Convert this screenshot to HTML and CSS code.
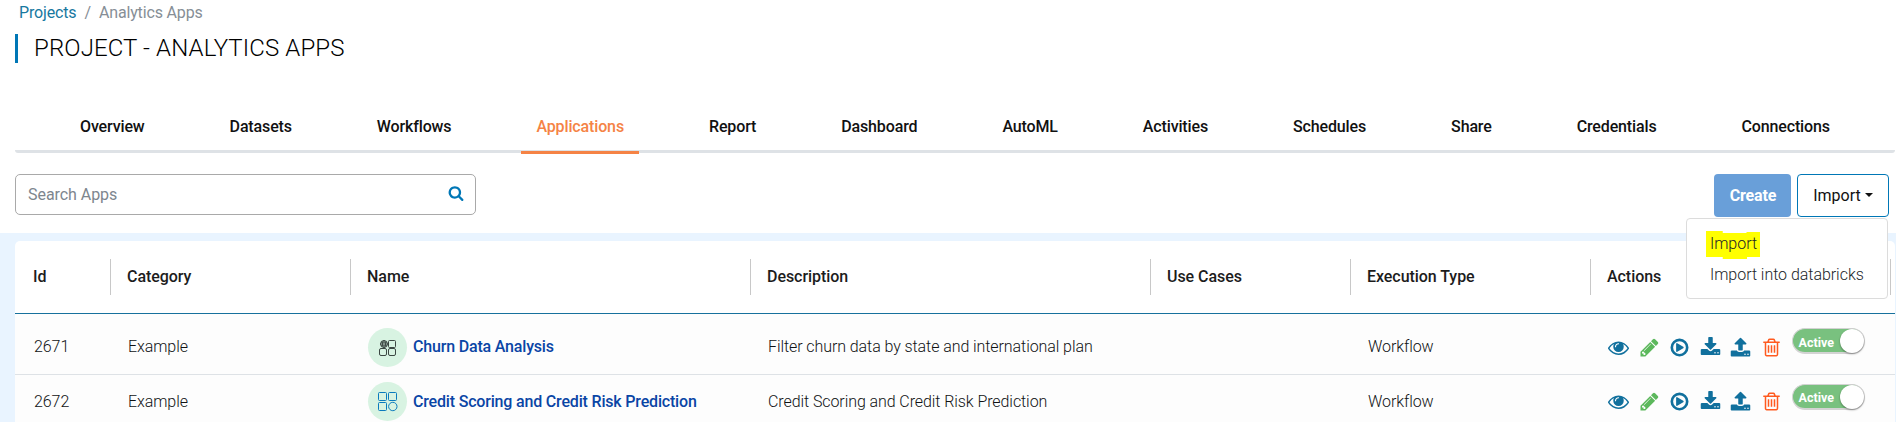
FILE: index.html
```html
<!DOCTYPE html>
<html lang="en">
<head>
<meta charset="utf-8">
<title>Project - Analytics Apps</title>
<link rel="stylesheet" href="styles.css">
</head>
<body>
<svg class="sprite" aria-hidden="true">
  <symbol id="i-search" viewBox="0 0 1792 1792"><path d="M1216 832q0-185-131.500-316.500t-316.500-131.500-316.500 131.500-131.500 316.500 131.500 316.500 316.500 131.500 316.500-131.500 131.500-316.500zm512 832q0 52-38 90t-90 38q-54 0-90-38l-343-342q-179 124-399 124-143 0-273.500-55.500t-225-150-150-225-55.500-273.500 55.500-273.500 150-225 225-150 273.500-55.500 273.500 55.500 225 150 150 225 55.500 273.500q0 220-124 399l343 343q37 37 37 90z"/></symbol>
  <symbol id="i-eye" viewBox="0 0 1792 1792"><path d="M1664 960q-152-236-381-353 61 104 61 225 0 185-131.500 316.500t-316.500 131.500-316.500-131.500-131.500-316.500q0-121 61-225-229 117-381 353 133 205 333.500 326.500t434.500 121.500 434.500-121.500 333.500-326.500zm-720-384q0-20-14-34t-34-14q-125 0-214.500 89.500t-89.500 214.500q0 20 14 34t34 14 34-14 14-34q0-86 61-147t147-61q20 0 34-14t14-34zm848 384q0 34-20 69-140 230-376.500 368.500t-499.500 138.500-499.500-139-376.500-368q-20-35-20-69t20-69q140-229 376.500-368t499.500-139 499.500 139 376.500 368q20 35 20 69z"/></symbol>
  <symbol id="i-pencil" viewBox="0 0 1792 1792"><path d="M491 1536l91-91-235-235-91 91v107h128v128h107zm523-928q0-22-22-22-10 0-17 7l-542 542q-7 7-7 17 0 22 22 22 10 0 17-7l542-542q7-7 7-17zm-54-192l416 416-832 832h-416v-416zm683 96q0 53-37 90l-166 166-416-416 166-165q36-38 90-38 53 0 91 38l235 234q37 39 37 91z"/></symbol>
  <symbol id="i-play" viewBox="0 0 1792 1792"><circle cx="896" cy="896" r="656" fill="none" stroke="currentColor" stroke-width="224"/><path d="M1248 896q0 37-32 55l-512 310q-32 18-64 0t-32-55v-620q0-37 32-55t64 0l512 310q32 18 32 55z"/></symbol>
  <symbol id="i-download" viewBox="0 0 1792 1792"><path d="M1344 1344q0-26-19-45t-45-19-45 19-19 45 19 45 45 19 45-19 19-45zm256 0q0-26-19-45t-45-19-45 19-19 45 19 45 45 19 45-19 19-45zm128-224v320q0 40-28 68t-68 28h-1472q-40 0-68-28t-28-68v-320q0-40 28-68t68-28h465l135 136q58 56 136 56t136-56l136-136h464q40 0 68 28t28 68zm-325-569q17 41-14 70l-448 448q-18 19-45 19t-45-19l-448-448q-31-29-14-70 17-39 59-39h256v-448q0-26 19-45t45-19h256q26 0 45 19t19 45v448h256q42 0 59 39z"/></symbol>
  <symbol id="i-upload" viewBox="0 0 1792 1792"><path d="M1344 1472q0-26-19-45t-45-19-45 19-19 45 19 45 45 19 45-19 19-45zm256 0q0-26-19-45t-45-19-45 19-19 45 19 45 45 19 45-19 19-45zm128-224v320q0 40-28 68t-68 28h-1472q-40 0-68-28t-28-68v-320q0-40 28-68t68-28h427q21 56 70.500 92t110.500 36h256q61 0 110.500-36t70.500-92h427q40 0 68 28t28 68zm-325-648q-17 40-59 40h-256v448q0 26-19 45t-45 19h-256q-26 0-45-19t-19-45v-448h-256q-42 0-59-40-17-39 14-69l448-448q18-19 45-19t45 19l448 448q31 30 14 69z"/></symbol>
  <symbol id="i-trash" viewBox="0 0 1792 1792"><path d="M704 736v576q0 14-9 23t-23 9h-64q-14 0-23-9t-9-23v-576q0-14 9-23t23-9h64q14 0 23 9t9 23zm256 0v576q0 14-9 23t-23 9h-64q-14 0-23-9t-9-23v-576q0-14 9-23t23-9h64q14 0 23 9t9 23zm256 0v576q0 14-9 23t-23 9h-64q-14 0-23-9t-9-23v-576q0-14 9-23t23-9h64q14 0 23 9t9 23zm128 724v-948h-896v948q0 22 7 40.500t14.500 27 10.500 8.500h832q3 0 10.500-8.500t14.500-27 7-40.500zm-672-1076h448l-48-117q-7-9-17-11h-317q-10 2-17 11zm928 32v64q0 14-9 23t-23 9h-96v948q0 83-47 143.500t-113 60.500h-832q-66 0-113-58.500t-47-141.500v-952h-96q-14 0-23-9t-9-23v-64q0-14 9-23t23-9h309l70-167q15-37 54-63t79-26h320q40 0 79 26t54 63l70 167h309q14 0 23 9t9 23z"/></symbol>
</svg>

<nav class="breadcrumb"><a class="crumb-link" href="#">Projects</a><span class="crumb-sep">/</span><span>Analytics Apps</span></nav>
<h1 class="title">PROJECT - ANALYTICS APPS</h1>

<nav class="tabs">
  <a class="tab">Overview</a>
  <a class="tab">Datasets</a>
  <a class="tab">Workflows</a>
  <a class="tab active">Applications</a>
  <a class="tab">Report</a>
  <a class="tab">Dashboard</a>
  <a class="tab">AutoML</a>
  <a class="tab">Activities</a>
  <a class="tab">Schedules</a>
  <a class="tab">Share</a>
  <a class="tab">Credentials</a>
  <a class="tab">Connections</a>
</nav>

<div class="toolbar">
  <div class="search"><span>Search Apps</span><svg class="search-icon"><use href="#i-search"/></svg></div>
  <div class="buttons">
    <button class="btn create">Create</button>
    <div class="import-wrap">
      <button class="btn import">Import<span class="caret"></span></button>
      <div class="menu">
        <a class="menu-item"><span class="marked">Import</span></a>
        <a class="menu-item">Import into databricks</a>
      </div>
    </div>
  </div>
</div>

<main class="panel">
  <div class="card">
    <div class="grid head">
      <div class="th">Id</div><div class="th">Category</div><div class="th">Name</div><div class="th">Description</div><div class="th">Use Cases</div><div class="th">Execution Type</div><div class="th">Actions</div>
    </div>
    <div class="grid row">
      <div class="td">2671</div>
      <div class="td">Example</div>
      <div class="td name"><span class="badge"><svg class="app-icon dark" viewBox="0 0 20 20"><circle cx="6" cy="6" r="3.500"/><ellipse cx="6" cy="6" rx="1.500" ry="3.500"/><path d="M2 6h8M3 4.200h6M3 7.800h6"/><rect x="10.500" y="2.500" width="7" height="7" rx="1"/><rect x="1.500" y="10.500" width="7" height="7" rx="1.500"/><rect x="10.500" y="10.500" width="7" height="7" rx="1.500"/></svg></span><a class="link">Churn Data Analysis</a></div>
      <div class="td">Filter churn data by state and international plan</div>
      <div class="td"></div>
      <div class="td">Workflow</div>
      <div class="td actions">
        <svg class="icon"><use href="#i-eye"/></svg><svg class="icon green"><use href="#i-pencil"/></svg><svg class="icon"><use href="#i-play"/></svg><svg class="icon"><use href="#i-download"/></svg><svg class="icon"><use href="#i-upload"/></svg><svg class="icon red"><use href="#i-trash"/></svg>
        <span class="toggle">Active<span class="knob"></span></span>
      </div>
    </div>
    <div class="grid row second">
      <div class="td">2672</div>
      <div class="td">Example</div>
      <div class="td name"><span class="badge"><svg class="app-icon" viewBox="0 0 20 20"><rect x=".5" y=".5" width="8" height="8" rx="1"/><rect x="10.500" y=".5" width="8" height="8" rx="1"/><rect x=".5" y="10.500" width="8" height="8" rx="1"/><circle cx="14.800" cy="14.500" r="4.200"/></svg></span><a class="link">Credit Scoring and Credit Risk Prediction</a></div>
      <div class="td">Credit Scoring and Credit Risk Prediction</div>
      <div class="td"></div>
      <div class="td">Workflow</div>
      <div class="td actions">
        <svg class="icon"><use href="#i-eye"/></svg><svg class="icon green"><use href="#i-pencil"/></svg><svg class="icon"><use href="#i-play"/></svg><svg class="icon"><use href="#i-download"/></svg><svg class="icon"><use href="#i-upload"/></svg><svg class="icon red"><use href="#i-trash"/></svg>
        <span class="toggle">Active<span class="knob"></span></span>
      </div>
    </div>
  </div>
</main>
</body>
</html>
```
FILE: styles.css
```css
* { box-sizing: border-box; }
body {
  margin: 0;
  height: 422px;
  overflow: hidden;
  background: #fff;
  color: #101214;
  font: 400 16px/24px Roboto, sans-serif;
}
.sprite { display: none; }
svg { fill: currentColor; }

.breadcrumb { display: flex; height: 25px; padding: 1px 0 0 19px; color: #868e96; letter-spacing: -.15px; }
.crumb-link { color: #17789f; text-decoration: none; }
.crumb-sep { padding: 0 8px; }
.title {
  height: 29px;
  margin: 9px 0 0 15px;
  padding-left: 16px;
  border-left: 3px solid #0077b6;
  color: #000;
  font-size: 24px;
  font-weight: 300;
  line-height: 28px;
  letter-spacing: .12px;
}

.tabs {
  display: flex;
  justify-content: space-between;
  height: 53px;
  margin: 37px 1px 0 15px;
  padding: 0 50px;
  border-bottom: 3px solid #dee2e6;
  border-radius: 3px;
}
.tab {
  height: 54px;
  padding: 15px 15px 0;
  color: #111;
  font-weight: 500;
  letter-spacing: -.14px;
}
.tab.active { border-bottom: 3px solid #f58345; color: #f58345; }

.toolbar { display: flex; justify-content: space-between; height: 80px; padding: 21px 7px 0 15px; }
.search {
  display: flex;
  justify-content: space-between;
  width: 461px;
  height: 41px;
  padding: 8px 11px 0 12px;
  border: 1px solid #a9a9a9;
  border-radius: 5px;
  color: #7d868e;
  letter-spacing: -.05px;
}
.search-icon { width: 16px; height: 16px; margin-top: 2px; color: #0077b6; }
.buttons { display: flex; gap: 6px; }
.btn { height: 43px; border-radius: 4px; font: inherit; }
.create { width: 77px; padding: 0 0 0 1px; border: 0; background: #699fd9; color: #fff; font-weight: 700; letter-spacing: -.15px; }
.import-wrap { position: relative; }
.import {
  display: flex;
  align-items: center;
  justify-content: center;
  width: 92px;
  padding: 0;
  border: 1px solid #0077b6;
  background: #fff;
  color: #111;
}
.caret { margin: -2px 0 0 4px; border: 4.500px solid transparent; border-top-color: #111; border-bottom: 0; }
.menu {
  position: absolute;
  z-index: 2;
  top: 44px;
  right: 1px;
  width: 202px;
  height: 81px;
  padding: 9px 0 0 23px;
  border: 1px solid #dcdcdc;
  border-radius: 4px;
  background: #fff;
  color: #212529;
  font-weight: 300;
  letter-spacing: -.04px;
}
.menu-item { display: block; height: 31px; line-height: 31px; white-space: nowrap; }
.marked {
  display: inline-block;
  height: 28px;
  margin-left: -4px;
  padding: 0 3px 0 4px;
  background: #ff0;
  line-height: 26px;
  clip-path: polygon(0 0, 31% 0, 31% 2px, 75% 2px, 75% 1px, 100% 1px, 100% 26px, 76% 26px, 76% 28px, 31% 28px, 31% 26px, 0 26px);
}

.panel { height: 189px; padding: 8px 1px 0 15px; background: #e9f4ff; }
.card { height: 181px; border-radius: 5px 5px 0 0; background: #fff; }
.grid { display: grid; grid-template-columns: 96px 240px 400px 400px 200px 240px 300px; }
.head { height: 73px; padding-top: 18px; border-bottom: 1px solid #17719d; }
.th {
  height: 36px;
  padding-left: 16px;
  border-right: 1px solid #c8c8c8;
  color: #1c1c1c;
  font-weight: 500;
  line-height: 36px;
  letter-spacing: -.05px;
}
.th:first-child { padding-left: 18px; }
.row { height: 61px; padding-top: 14px; border-bottom: 1px solid #dee2e6; background: #fdfdfd; font-weight: 300; letter-spacing: -.08px; }
.row.second { padding-top: 7px; }
.td { height: 40px; padding-left: 17px; line-height: 38px; white-space: nowrap; }
.second .td { line-height: 40px; }
.td:first-child { padding-left: 19px; }
.name { display: flex; }
.badge {
  display: flex;
  align-items: center;
  justify-content: center;
  width: 39px;
  height: 39px;
  margin-right: 6px;
  border-radius: 50%;
  background: #d8f3e2;
}
.app-icon { width: 20px; height: 20px; fill: none; stroke: #0b7bbd; stroke-width: 1; }
.app-icon.dark { stroke: #3c4743; }
.link { color: #0a45a5; font-weight: 500; letter-spacing: -.18px; }
.actions { display: flex; align-items: flex-start; gap: 9.600px; color: #11709d; }
.icon { flex: none; width: 21px; height: 21px; margin-top: 9px; }
.green { color: #5cb85c; }
.red { color: #ff5a1f; }
.toggle {
  position: relative;
  width: 73px;
  height: 26px;
  padding-left: 6px;
  border: 2px solid #d3d3d3;
  border-width: 1px 2px 2px 1px;
  border-radius: 13px;
  background: #79c17f;
  color: #fff;
  font-size: 12.500px;
  font-weight: 700;
  line-height: 27px;
  letter-spacing: 0;
}
.second .toggle { margin-top: 2px; line-height: 25px; }
.knob {
  position: absolute;
  top: 0;
  right: -1px;
  width: 24px;
  height: 24px;
  border-radius: 50%;
  background: #fff;
  box-shadow: 0 1px 2px rgba(0, 0, 0, .4);
}
```
